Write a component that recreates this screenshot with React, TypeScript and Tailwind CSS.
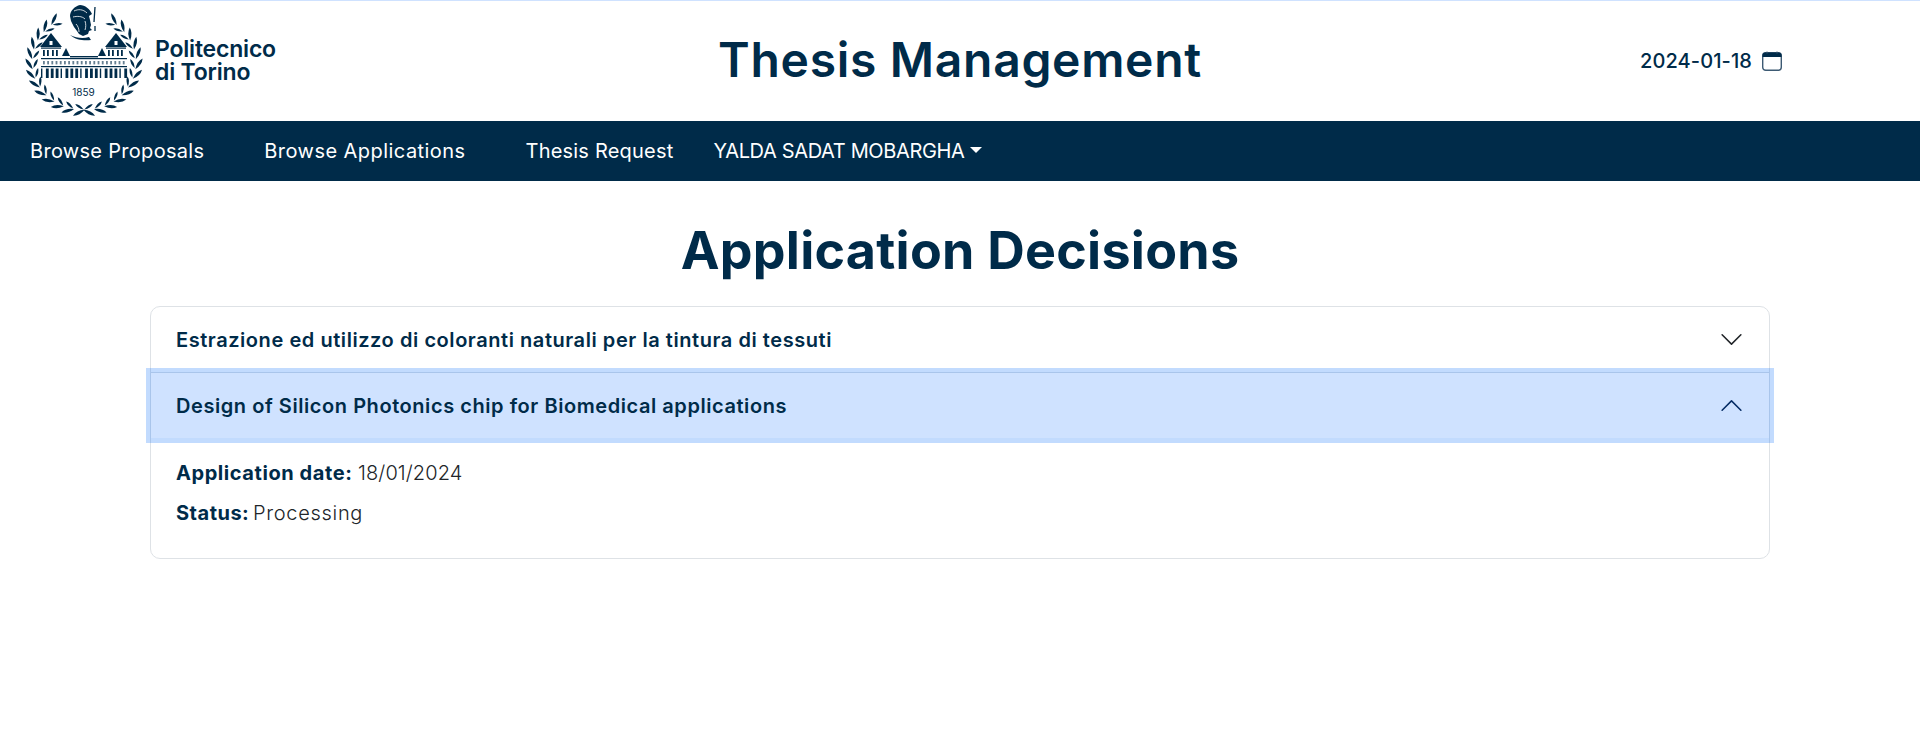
const navy = "#002b49";

// one laurel branch, mirrored for the other side
const Branch = () => (
  <g fill={navy}>
    {[...Array(13)].map((_, i) => {
      const deg = 33 + i * 11.8;
      const a = (deg * Math.PI) / 180;
      const outX = 84 + 55 * Math.sin(a);
      const outY = 62 - 51 * Math.cos(a);
      const inX = 84 + 48.5 * Math.sin(a);
      const inY = 62 - 45 * Math.cos(a);
      return (
        <g key={i}>
          <path d="M0 -6.5Q3.2 -1 0 6.5Q-3.2 -1 0 -6.5z" transform={`translate(${outX} ${outY}) rotate(${deg - 90 + 32})`} />
          <path d="M0 -5Q2.4 -1 0 5Q-2.4 -1 0 -5z" transform={`translate(${inX} ${inY}) rotate(${deg - 90 - 28})`} />
        </g>
      );
    })}
  </g>
);

const Logo = () => (
  <div className="flex items-center">
    <svg width="122" height="114" viewBox="24 4 122 114" className="shrink-0">
      <Branch />
      <g transform="translate(168 0) scale(-1 1)">
        <Branch />
      </g>
      {/* minerva head */}
      <path fill={navy} d="M70 16c0-5 5-10 10-11 5 0 10 4 12 9l-3 2 1 4 1 5-1 3 2 2-3 1-1 3-5 2-4-2-2-3-3-4-3-6z" />
      <path stroke="#fff" strokeWidth="0.8" fill="none" d="M74 11c4-2 9-2 13 2M73 17c4-1 9-1 12 2M85 21c1 3 1 6 0 9M76 24c2 2 3 5 3 8" />
      <path fill={navy} d="M70 35c6 3 13 4 19 2l2 3c-7 1-15 0-21-5z" />
      <path stroke={navy} strokeWidth="1.3" fill="none" d="M95 7l-1 15M95 26v5" />
      {/* palazzo */}
      <g fill={navy}>
        <path d="M40 47l11-14 11 14z" />
        <path d="M105 47l11-14 11 14z" />
        <path d="M62 56l4-8 4 8z" />
        <path d="M98 56l4-8 4 8z" />
        <path d="M70 56h28v1.4H70z" />
        <rect x="41" y="47.5" width="20" height="1.2" />
        <rect x="106" y="47.5" width="20" height="1.2" />
        {[43, 47, 52, 56, 108, 112, 117, 121].map((x) => (
          <rect key={x} x={x} y="50" width="1.8" height="6" />
        ))}
        <rect x="41" y="58" width="86" height="1.2" />
        <rect x="41" y="66" width="86" height="1.2" />
        {[...Array(20)].map((_, i) => (
          <rect key={i} x={43 + i * 4.2} y="61" width="1.8" height="3.4" opacity="0.6" />
        ))}
        {[...Array(18)].map((_, i) => (
          <rect key={i} x={41 + i * 4.9} y="68.5" width={i % 4 === 0 ? 1.4 : 2.8} height="9.5" />
        ))}
      </g>
      <path fill="#fff" d="M49.5 41h3v4h-3zM114.5 41h3v4h-3z" />
      <text x="83.5" y="96" textAnchor="middle" fontSize="10" fill={navy} fontFamily="Inter, sans-serif">1859</text>
    </svg>
    <div className="ml-[9px] text-[23px] leading-[23px] font-semibold tracking-[-0.2px] text-[#002b49]">
      <div>Politecnico</div>
      <div>di Torino</div>
    </div>
  </div>
);

const Chevron = ({ up }: { up?: boolean }) => (
  <svg width="25" height="25" viewBox="0 0 16 16" fill={up ? "#052c65" : "#212529"}>
    {up ? (
      <path fillRule="evenodd" d="M1.646 11.354a.5.5 0 0 0 .708 0L8 5.707l5.646 5.647a.5.5 0 0 0 .708-.708l-6-6a.5.5 0 0 0-.708 0l-6 6a.5.5 0 0 0 0 .708z" />
    ) : (
      <path fillRule="evenodd" d="M1.646 4.646a.5.5 0 0 1 .708 0L8 10.293l5.646-5.647a.5.5 0 0 1 .708.708l-6 6a.5.5 0 0 1-.708 0l-6-6a.5.5 0 0 1 0-.708z" />
    )}
  </svg>
);

const CalendarIcon = () => (
  <svg width="20" height="20" viewBox="0 0 20 20" fill="none">
    <rect x="0.7" y="1.7" width="18.6" height="17.6" rx="3" stroke="#3d5a73" strokeWidth="1.4" />
    <path d="M0.5 6V4.5A3 3 0 0 1 3.5 1.5h13a3 3 0 0 1 3 3V6z" fill={navy} />
    <path d="M5 0.5v2M15 0.5v2" stroke="#3d5a73" strokeWidth="1" />
  </svg>
);

export default function App() {
  return (
    <div className="min-h-[748px] bg-white font-['Inter',sans-serif] text-[#002b49]">
      <div className="h-px bg-[#cfe2ff]" />
      <header className="grid h-[120px] grid-cols-[1fr_auto_1fr] items-center px-[24px]">
        <Logo />
        <h1 className="mb-[3px] text-center text-[48px] font-semibold tracking-[0.7px]">Thesis Management</h1>
        <div className="flex items-center justify-end gap-[10px] pr-[114px] text-[20px] font-medium tracking-[0.1px]">
          2024-01-18
          <CalendarIcon />
        </div>
      </header>

      <nav className="flex h-[60px] items-center bg-[#002b49] pl-[30px] text-[20px] text-white">
        <a className="tracking-[0.3px]">Browse Proposals</a>
        <a className="ml-[60px] tracking-[0.45px]">Browse Applications</a>
        <a className="ml-[60px] tracking-[0.2px]">Thesis Request</a>
        <a className="ml-[40px] tracking-[-0.35px]">YALDA SADAT MOBARGHA</a>
        <span className="ml-[5px] mb-[3px] border-x-[6px] border-t-[6px] border-x-transparent border-t-white" />
      </nav>

      <main className="mx-auto w-[1620px]">
        <h2 className="pt-[36px] pb-[21px] text-center text-[52px] leading-[68px] font-bold tracking-[0.25px]">Application Decisions</h2>
        <div className="rounded-[10px] border border-[#dee2e6]">
          <div className="flex h-[65px] items-center justify-between pl-[25px] pr-[25px]">
            <span className="text-[20px] font-semibold tracking-[0.56px]">Estrazione ed utilizzo di coloranti naturali per la tintura di tessuti</span>
            <Chevron />
          </div>
          <div className="border-t border-[#dee2e6]">
            <div className="flex h-[65px] items-center justify-between bg-[#cfe2ff] pl-[25px] pr-[25px] shadow-[0_0_0_5px_rgba(13,110,253,0.25)]">
              <span className="text-[20px] font-semibold tracking-[0.56px]">Design of Silicon Photonics chip for Biomedical applications</span>
              <Chevron up />
            </div>
          </div>
          <div className="px-[25px] pt-[20px] pb-[30px] text-[20px] leading-[30px] font-light text-[#212529]">
            <p className="mb-[10px]">
              <b className="font-bold tracking-[0.57px] text-[#002b49]">Application date:</b> <span className="tracking-[0.1px]">18/01/2024</span>
            </p>
            <p>
              <b className="font-bold tracking-[0.5px] text-[#002b49]">Status:</b> <span className="-ml-[2px] tracking-[0.7px]">Processing</span>
            </p>
          </div>
        </div>
      </main>
    </div>
  );
}
